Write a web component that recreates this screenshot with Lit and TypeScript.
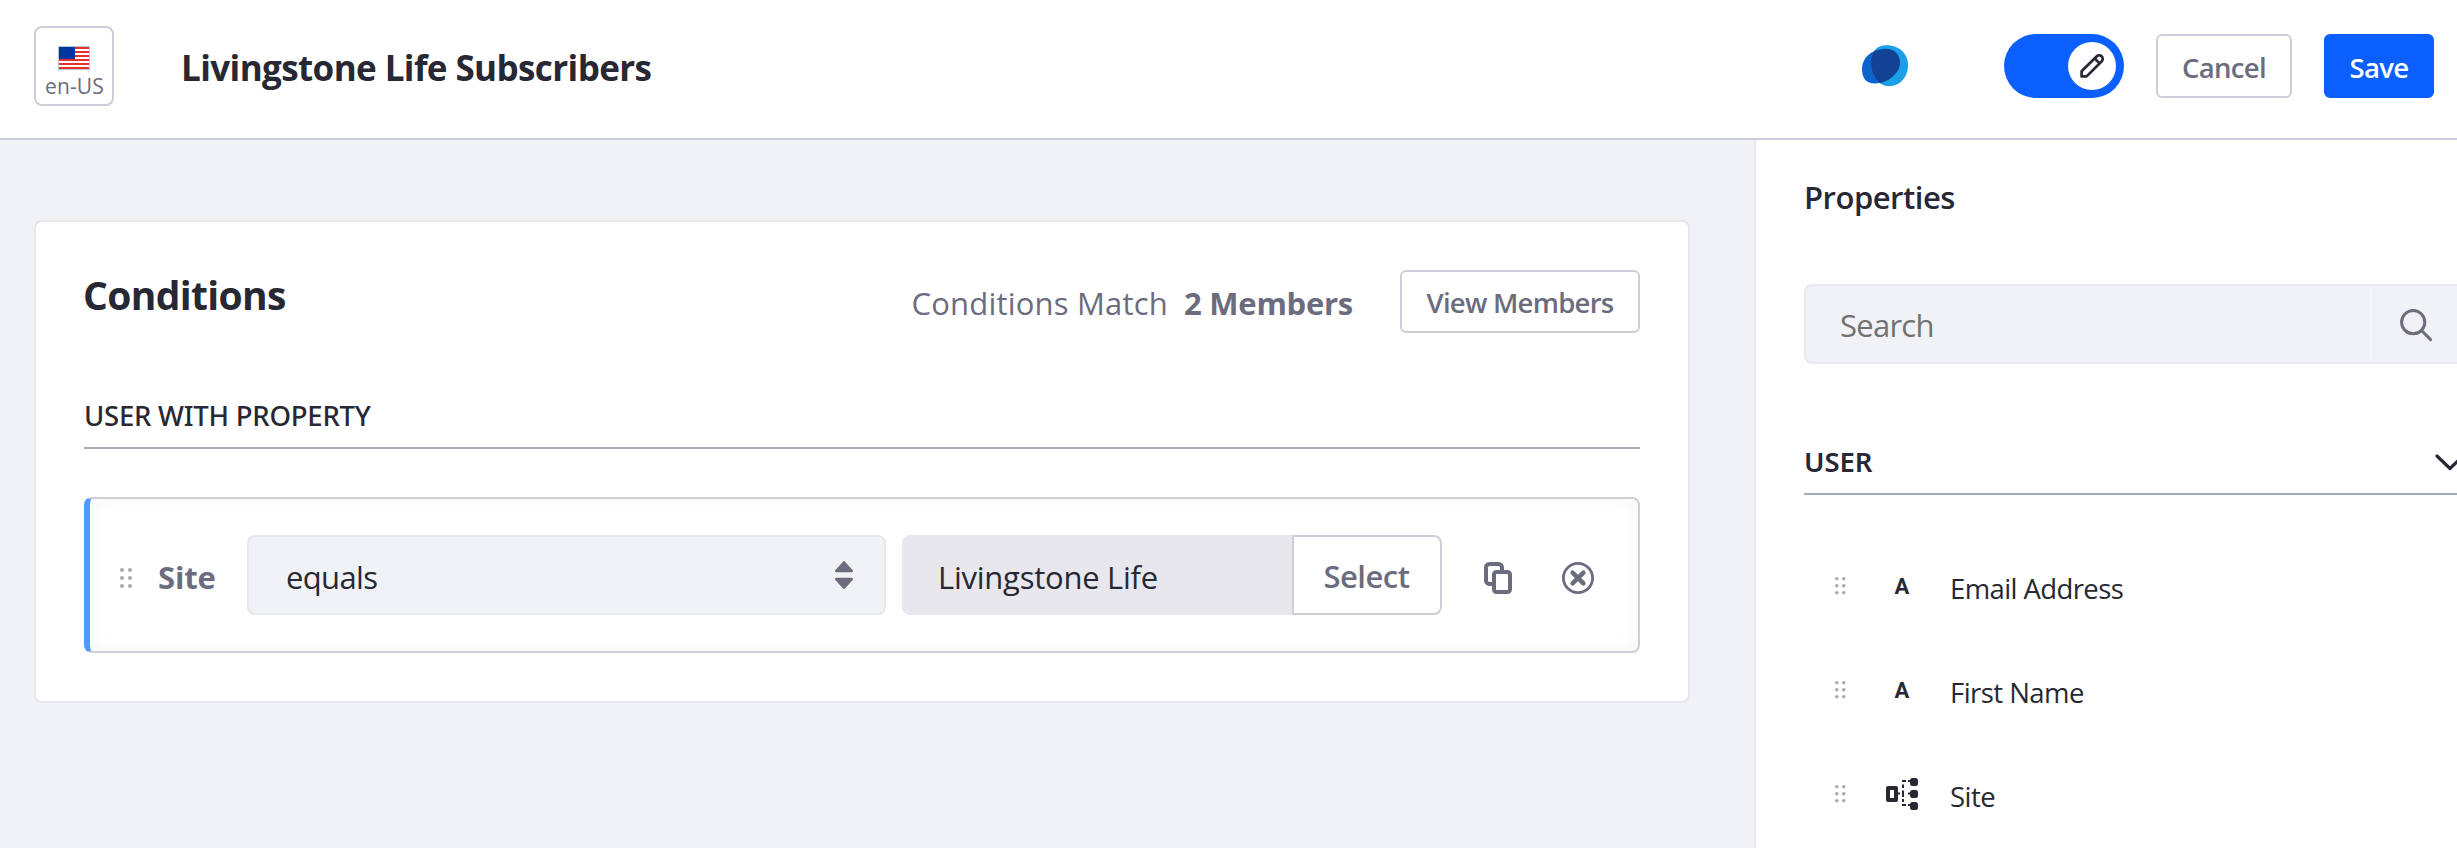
import { LitElement, html, css, svg } from "lit";
import { customElement, property } from "lit/decorators.js";

const dots = (step: number, r: number) => html`
  <svg width=${step + 2 * r} height=${2 * step + 2 * r} fill="#a7a9bc" style="display:block">
    ${[0, 1, 2].map((row) => [0, 1].map((col) => svg`<circle cx=${r + col * step} cy=${r + row * step} r=${r}></circle>`))}
  </svg>`;

const flag = html`
  <svg width="32" height="24" viewBox="0 0 32 24" shape-rendering="crispEdges">
    <rect width="32" height="24" fill="#b7c9d6"></rect>
    <rect x="1" y="1" width="30" height="22" fill="#fff"></rect>
    ${[1, 5, 9, 13, 17, 21].map((y) => svg`<rect x="1" y=${y} width="30" height="2" fill="#e8312f"></rect>`)}
    <rect x="1" y="1" width="16" height="12" fill="#0035a0"></rect>
  </svg>`;

const logo = html`
  <svg width="48" height="44" viewBox="0 0 48 44">
    <defs><clipPath id="blob"><path d="M21 4C31 3 38 8 38 18C38 27 27 38.500 13 38.500C4 38.500 0 33 0 24C0 13 9 5 21 4Z"></path></clipPath></defs>
    <path fill="#0b63ce" d="M21 4C31 3 38 8 38 18C38 27 27 38.500 13 38.500C4 38.500 0 33 0 24C0 13 9 5 21 4Z"></path>
    <path fill="#1b9fe8" d="M23 0.3C36 -0.5 46 8 46 20C46 32 38 41.200 27 41.200C16 41.200 9 30 9 18C9 7 14 1 23 0.300Z"></path>
    <path clip-path="url(#blob)" fill="#134295" d="M23 0.3C36 -0.5 46 8 46 20C46 32 38 41.200 27 41.200C16 41.200 9 30 9 18C9 7 14 1 23 0.300Z"></path>
  </svg>`;

const pencil = html`
  <svg width="24" height="24" viewBox="0 0 24 24" fill="none" stroke="#272833" stroke-width="2.700" stroke-linejoin="round">
    <path d="M1.600 22.400V17.200L16.800 2.200C18 1 20.200 0.900 21.600 2.300C23 3.700 23 5.900 21.800 7.200L6.600 22.400Z"></path>
    <path d="M14.600 4.400L19.600 9.400"></path>
  </svg>`;

const copy = html`
  <svg width="28" height="32" viewBox="0 0 28 32" fill="none" stroke="#6b6c7e" stroke-width="4">
    <path d="M8 22H6C3.500 22 2 20.500 2 18.500V5.500C2 3.500 3.500 2 5.500 2H14.500C16.500 2 18 3.500 18 5.500V8"></path>
    <rect x="10" y="10" width="16" height="20" rx="2.500"></rect>
  </svg>`;

const close = html`
  <svg width="32" height="32" viewBox="0 0 32 32" fill="none" stroke="#6b6c7e">
    <circle cx="16" cy="16" r="14.600" stroke-width="2.800"></circle>
    <path d="M10.600 10.600L21.400 21.400M21.400 10.600L10.600 21.400" stroke-width="4.400" stroke-linecap="round"></path>
  </svg>`;

const carets = html`
  <svg width="20" height="28" viewBox="0 0 20 28" fill="#6b6c7e">
    <path d="M9 0.800C9.500 0.200 10.500 0.200 11 0.800L18.600 9C19.400 10 19 11.200 17.800 11.200H2.200C1 11.200 0.600 10 1.400 9Z"></path>
    <path d="M9 27.400C9.500 28 10.500 28 11 27.400L18.600 19C19.400 18 19 16.800 17.800 16.800H2.200C1 16.800 0.600 18 1.400 19Z"></path>
  </svg>`;

const magnifier = html`
  <svg width="33" height="33" viewBox="0 0 33 33" fill="none" stroke="#6b6c7e" stroke-width="3" stroke-linecap="round">
    <circle cx="13.200" cy="13.200" r="11.600"></circle>
    <path d="M21.800 21.800L30.600 30.600"></path>
  </svg>`;

const chevron = html`
  <svg width="30" height="17" viewBox="0 0 30 17" fill="none" stroke="#272833" stroke-width="3.200" stroke-linecap="round" stroke-linejoin="round">
    <path d="M2 2L15 14.500L28 2"></path>
  </svg>`;

const siteIcon = html`
  <svg width="32" height="32" viewBox="0 0 32 32" fill="#272833">
    <path fill-rule="evenodd" d="M2 8H10Q12 8 12 10V22Q12 24 10 24H2Q0 24 0 22V10Q0 8 2 8ZM4 12V20H8V12Z"></path>
    <rect x="24" y="0" width="8" height="8" rx="2.500"></rect>
    <rect x="24" y="12" width="8" height="8" rx="2.500"></rect>
    <rect x="24" y="24" width="8" height="8" rx="2.500"></rect>
    <path d="M16 2h4v2h-4zM22 2h3v2h-3zM12 14.500h2v2h-2zM22 14.500h3v2h-3zM16 26h4v2h-4zM22 26h3v2h-3zM16 6.500h2v3.500h-2zM16 12.500h2v6.500h-2zM16 21h2v3h-2z"></path>
  </svg>`;

@customElement("property-item")
class PropertyItem extends LitElement {
  @property() label = "";
  @property() kind = "text";
  @property() spacing = "0";

  static styles = css`
    :host { display: flex; height: 104px; padding-left: 31px; color: #272833; }
    .grip { width: 51px; padding-top: 41px; }
    .icon { width: 64px; padding-top: 34px; line-height: 32px; }
    .icon svg { display: block; }
    .icon.letter { font: 700 22px/34px Roboto, sans-serif; text-indent: 8.500px; }
    .label { font-size: 27.500px; line-height: 40px; padding-top: 32.500px; white-space: nowrap; }
  `;

  render() {
    return html`
      <div class="grip">${dots(7, 1.8)}</div>
      <div class="icon ${this.kind === "text" ? "letter" : ""}">${this.kind === "text" ? "A" : siteIcon}</div>
      <div class="label" style="letter-spacing:${this.spacing}px">${this.label}</div>`;
  }
}

@customElement("app-root")
class AppRoot extends LitElement {
  static styles = css`
    :host { display: block; width: 2457px; height: 848px; overflow: hidden; background: #fff; color: #272833;
      font-family: "Open Sans", "Noto Sans", sans-serif; font-size: 31px; white-space: nowrap; }
    * { box-sizing: border-box; }
    svg { display: block; flex: none; }
    header { display: flex; align-items: flex-start; height: 140px; border-bottom: 2px solid #cdced9; padding-left: 34px; }
    .lang { width: 80px; height: 80px; margin-top: 26px; border: 2px solid #cdced9; border-radius: 8px;
      display: flex; flex-direction: column; align-items: center; padding-top: 18px; color: #6b6c7e;
      font-size: 21px; line-height: 28px; letter-spacing: .1px; }
    .lang span { padding: 2px 0 0 1px; }
    h1 { margin: 44px 0 0 67px; font-size: 35px; line-height: 48px; letter-spacing: -.6px; font-weight: 700; flex: 1; }
    .logo { margin: 45px 94px 0 0; width: 48px; }
    .toggle { width: 120px; height: 64px; margin-top: 34px; border-radius: 32px; background: #0b5fff; padding: 8px; display: flex; justify-content: flex-end; }
    .knob { width: 48px; height: 48px; border-radius: 50%; background: #fff; display: grid; place-items: center; }
    .btn { font-weight: 600; font-size: 27.500px; line-height: 36px; border: 2px solid #cdced9; border-radius: 6px; background: #fff;
      color: #6b6c7e; text-align: center; height: 64px; padding-top: 13.500px; letter-spacing: -.65px; }
    .cancel { width: 136px; margin: 34px 0 0 32px; }
    .save { width: 110px; margin: 34px 23px 0 32px; background: #0b5fff; border-color: #0b5fff; color: #fff; }
    main { display: flex; height: 708px; }
    .canvas { width: 1754px; background: #f1f2f5; padding: 80px 0 0 34px; }
    .card { width: 1656px; height: 483px; background: #fff; border: 2px solid #e7e7ed; border-radius: 8px; padding: 0 48px; }
    .head { display: flex; align-items: flex-start; height: 160px; }
    h2 { margin: 45px 0 0; font-size: 39px; line-height: 56px; letter-spacing: -.65px; font-weight: 700; flex: 1; text-indent: -1px; }
    .match { color: #6b6c7e; line-height: 44px; margin-top: 59px; letter-spacing: .2px; }
    .count { color: #6b6c7e; line-height: 44px; margin: 59px 47px 0 16px; font-weight: 700; letter-spacing: -.25px; }
    .view { width: 240px; height: 63px; margin-top: 48px; letter-spacing: -.75px; padding-top: 12.500px; }
    .section { font: 500 27.500px/40px "Noto Sans", sans-serif; border-bottom: 2px solid #a7a9bc; display: flex; justify-content: space-between; }
    .section.cond { height: 67px; padding-top: 14px; letter-spacing: -.23px; }
    .row { margin-top: 48px; height: 156px; border: 2px solid #cdced9; border-left: 6px solid #4b9bff; border-radius: 8px;
      box-shadow: inset 0 0 20px rgba(0,0,0,.04); display: flex; align-items: flex-start; padding: 36px 0 0 30px; }
    .grip { padding-top: 32.500px; width: 38px; }
    .field-name { width: 89px; color: #6b6c7e; font-weight: 700; line-height: 44px; padding-top: 20px; letter-spacing: -.15px; }
    .select { width: 639px; height: 80px; background: #f1f2f5; border: 2px solid #e7e7ed; border-radius: 8px; line-height: 44px;
      padding: 18px 30px 0 37px; display: flex; justify-content: space-between; letter-spacing: -.65px; }
    .select svg { margin-top: 6px; }
    .value { width: 390px; height: 80px; margin-left: 16px; border-radius: 8px 0 0 8px; background: #e7e7ed; line-height: 44px;
      padding: 20px 0 0 36px; letter-spacing: -.25px; }
    .pick { width: 150px; height: 80px; border: 2px solid #cdced9; border-radius: 0 8px 8px 0; background: #fff; color: #6b6c7e;
      font-weight: 600; line-height: 44px; letter-spacing: -.5px; text-align: center; padding: 17px 1px 0 0; }
    .copy { margin: 27px 0 0 42px; }
    .close { margin: 27px 0 0 50px; }
    aside { width: 703px; border-left: 2px solid #e7e7ed; background: #fff; padding: 0 0 0 48px; overflow: hidden; }
    h3 { margin: 35px 0 0; font-size: 31px; line-height: 44px; font-weight: 600; letter-spacing: -.48px; }
    .search { margin-top: 65px; height: 80px; width: 680px; border: 2px solid #e7e7ed; border-radius: 8px; background: #f1f2f5;
      display: flex; line-height: 44px; color: #717171; letter-spacing: -.75px; }
    .query { width: 565px; padding: 17px 0 0 34px; border-right: 1px solid #f7f8fa; }
    .search svg { margin: 23px 0 0 29px; }
    .section.user { margin-top: 88px; height: 43px; letter-spacing: -.1px; width: 661px; font-weight: 600; }
    .section.user svg { margin: 2px 0 0; }
    .section.user span { margin-top: -10px; }
    .items { padding-top: 41px; }
  `;

  render() {
    return html`
      <header>
        <div class="lang">${flag}<span>en-US</span></div>
        <h1>Livingstone Life Subscribers</h1>
        <div class="logo">${logo}</div>
        <div class="toggle"><div class="knob">${pencil}</div></div>
        <div class="btn cancel">Cancel</div>
        <div class="btn save">Save</div>
      </header>
      <main>
        <div class="canvas">
          <section class="card">
            <div class="head">
              <h2>Conditions</h2>
              <div class="match">Conditions Match</div>
              <div class="count">2 Members</div>
              <div class="btn view">View Members</div>
            </div>
            <div class="section cond"><span>USER WITH PROPERTY</span></div>
            <div class="row">
              <div class="grip">${dots(8, 2)}</div>
              <div class="field-name">Site</div>
              <div class="select"><span>equals</span>${carets}</div>
              <div class="value">Livingstone Life</div>
              <div class="pick">Select</div>
              <div class="copy">${copy}</div>
              <div class="close">${close}</div>
            </div>
          </section>
        </div>
        <aside>
          <h3>Properties</h3>
          <div class="search"><div class="query">Search</div>${magnifier}</div>
          <div class="section user"><span>USER</span>${chevron}</div>
          <div class="items">
            <property-item label="Email Address" spacing="-0.6"></property-item>
            <property-item label="First Name" spacing="-0.55"></property-item>
            <property-item label="Site" kind="site" spacing="-0.5"></property-item>
          </div>
        </aside>
      </main>`;
  }
}
